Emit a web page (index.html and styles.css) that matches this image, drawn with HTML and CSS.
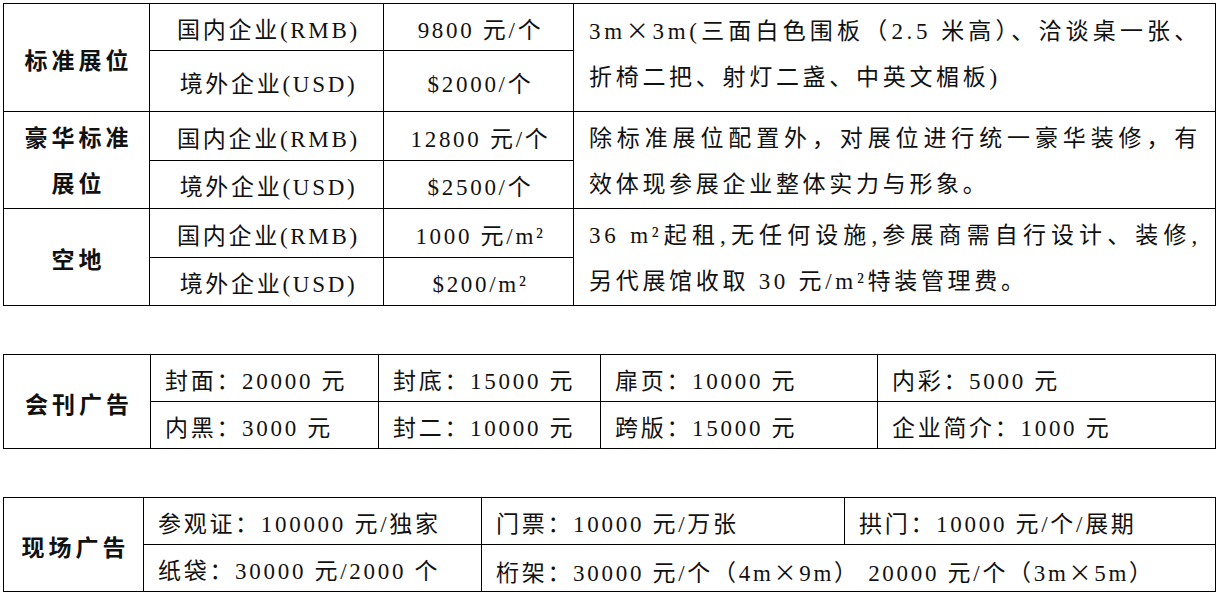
FILE: index.html
```html
<!DOCTYPE html>
<html lang="zh-CN">
<head>
<meta charset="utf-8">
<title>展位及广告价格</title>
<link rel="stylesheet" href="styles.css">
</head>
<body>
<div class="page">
  <table class="grid t1">
    <colgroup>
      <col class="c-head1"><col class="c-who"><col class="c-price"><col>
    </colgroup>
    <tr>
      <th rowspan="2">标准展位</th>
      <td class="center">国内企业(RMB)</td>
      <td class="center">9800 元/个</td>
      <td rowspan="2" class="desc top"><span class="ln full">3m<span class="cjk">×</span>3m(三面白色围板（2.5 米高）、洽谈桌一张、</span><span class="ln">折椅二把、射灯二盏、中英文楣板)</span></td>
    </tr>
    <tr class="tall">
      <td class="center">境外企业(USD)</td>
      <td class="center">$2000/个</td>
    </tr>
    <tr>
      <th rowspan="2" class="two">豪华标准展位</th>
      <td class="center">国内企业(RMB)</td>
      <td class="center">12800 元/个</td>
      <td rowspan="2" class="desc"><span class="ln full">除标准展位配置外，对展位进行统一豪华装修，有</span><span class="ln">效体现参展企业整体实力与形象。</span></td>
    </tr>
    <tr>
      <td class="center">境外企业(USD)</td>
      <td class="center">$2500/个</td>
    </tr>
    <tr>
      <th rowspan="2">空地</th>
      <td class="center">国内企业(RMB)</td>
      <td class="center">1000 元/m²</td>
      <td rowspan="2" class="desc"><span class="ln full">36 m²起租,无任何设施,参展商需自行设计、装修,</span><span class="ln">另代展馆收取 30 元/m²特装管理费。</span></td>
    </tr>
    <tr>
      <td class="center">境外企业(USD)</td>
      <td class="center">$200/m²</td>
    </tr>
  </table>

  <table class="grid t2">
    <colgroup>
      <col class="c-head2"><col class="c-a"><col class="c-b"><col class="c-c"><col>
    </colgroup>
    <tr>
      <th rowspan="2">会刊广告</th>
      <td>封面：20000 元</td>
      <td>封底：15000 元</td>
      <td>扉页：10000 元</td>
      <td>内彩：5000 元</td>
    </tr>
    <tr>
      <td>内黑：3000 元</td>
      <td>封二：10000 元</td>
      <td>跨版：15000 元</td>
      <td>企业简介：1000 元</td>
    </tr>
  </table>

  <table class="grid t3">
    <colgroup>
      <col class="c-head3"><col class="c-x"><col class="c-y"><col>
    </colgroup>
    <tr>
      <th rowspan="2">现场广告</th>
      <td>参观证：100000 元/独家</td>
      <td>门票：10000 元/万张</td>
      <td>拱门：10000 元/个/展期</td>
    </tr>
    <tr>
      <td>纸袋：30000 元/2000 个</td>
      <td colspan="2">桁架：30000 元/个（4m<span class="cjk">×</span>9m） 20000 元/个（3m<span class="cjk">×</span>5m）</td>
    </tr>
  </table>
</div>
</body>
</html>
```

FILE: styles.css
```css
html, body {
  margin: 0;
  padding: 0;
  background: #ffffff;
}

body {
  font-family: "Liberation Serif", "Noto Sans CJK SC", serif;
  font-size: 23px;
  font-weight: 400;
  color: #111111;
}

.page {
  padding: 3px 0 0 3px;
}

.cjk {
  font-family: "Noto Sans CJK SC", sans-serif;
}

.grid {
  width: 1213px;
  border-collapse: collapse;
  table-layout: fixed;
}

.grid + .grid {
  margin-top: 48px;
}

.grid tr {
  height: 47px;
}

.grid tr.tall {
  height: 61px;
}

.grid th,
.grid td {
  border: 1px solid #000000;
  padding: 8px 14px 0;
  line-height: 30px;
  letter-spacing: 2.7px;
  vertical-align: middle;
  white-space: nowrap;
  text-align: left;
}

.grid th {
  font-weight: 700;
  text-align: center;
  letter-spacing: 4px;
  padding-left: 12px;
  padding-right: 8px;
}

.grid th.two {
  white-space: normal;
  line-height: 46px;
  padding-top: 4px;
}

.grid td.center {
  text-align: center;
  padding-left: 4px;
  padding-right: 0;
}

.grid td.desc {
  line-height: 46px;
  padding: 4px 14px 0 15px;
  letter-spacing: 3.7px;
}

.grid td.desc.top {
  vertical-align: top;
  padding-top: 2px;
}

.ln {
  display: block;
}

.ln.full {
  text-align: justify;
  text-align-last: justify;
}

.c-head1 { width: 146px; }
.c-who { width: 234px; }
.c-price { width: 190px; }

.c-head2 { width: 147px; }
.c-a { width: 228px; }
.c-b { width: 222px; }
.c-c { width: 277px; }

.c-head3 { width: 140px; }
.c-x { width: 338px; }
.c-y { width: 363px; }
```
